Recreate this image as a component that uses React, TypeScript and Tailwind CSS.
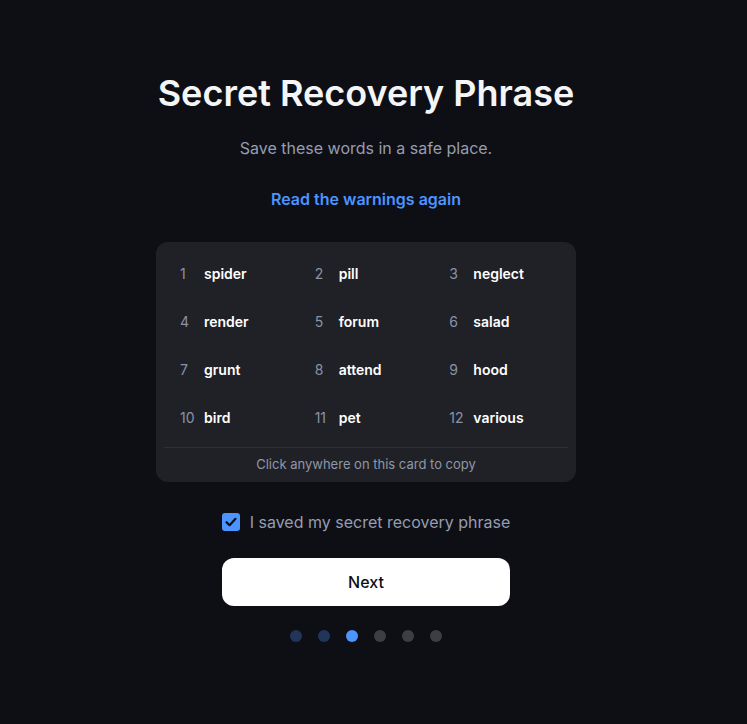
import React from "react";

const words = [
  "spider", "pill", "neglect",
  "render", "forum", "salad",
  "grunt", "attend", "hood",
  "bird", "pet", "various",
];

export default function App() {
  return (
    <div className="min-h-[724px] w-full bg-[#0e0f14]">
      <div
        className="w-[732px] flex flex-col items-center pt-[73px]"
        style={{ fontFamily: "Inter, 'Noto Sans', sans-serif" }}
      >
        <h1 className="text-[36px] leading-[40px] font-semibold text-[#f4f5f7]">
          Secret Recovery Phrase
        </h1>
        <p className="mt-[23px] text-[16px] leading-[24px] text-[#959db1]">
          Save these words in a safe place.
        </p>
        <button className="mt-[27px] text-[16px] leading-[24px] font-semibold text-[#4c94ff]">
          Read the warnings again
        </button>
        <div className="mt-[31px] w-[420px] rounded-[12px] bg-[#202127] px-2 pt-[7px] cursor-pointer">
          <div className="grid grid-cols-3">
            {words.map((w, i) => (
              <div key={i} className="h-12 flex items-center pl-4 text-[14px]">
                <span className="w-6 text-[#8a92a6]">{i + 1}</span>
                <span className="font-semibold text-white">{w}</span>
              </div>
            ))}
          </div>
          <div className="mt-[6px] h-px bg-[#2e3038]" />
          <div className="h-[34px] flex items-center justify-center text-[13px] text-[#8f97a8]">
            Click anywhere on this card to copy
          </div>
        </div>
        <label className="mt-[28px] flex items-center gap-[10px] text-[16px] leading-[24px] text-[#959db1]">
          <span className="w-[18px] h-[18px] rounded-[3px] bg-[#4c94ff] flex items-center justify-center">
            <svg width="14" height="14" viewBox="0 0 14 14" fill="none">
              <path d="M2.5 7.2 L5.6 10.2 L11.5 3.8" stroke="#0e0f14" strokeWidth="2.2" strokeLinecap="round" strokeLinejoin="round" />
            </svg>
          </span>
          I saved my secret recovery phrase
        </label>
        <button className="mt-[24px] w-[288px] h-[48px] rounded-[12px] bg-white text-[16px] font-medium text-[#0e0f14]">
          Next
        </button>
        <div className="mt-[24px] flex gap-4">
          <span className="w-3 h-3 rounded-full bg-[#213459]" />
          <span className="w-3 h-3 rounded-full bg-[#213459]" />
          <span className="w-3 h-3 rounded-full bg-[#4c94ff]" />
          <span className="w-3 h-3 rounded-full bg-[#3d3e44]" />
          <span className="w-3 h-3 rounded-full bg-[#3d3e44]" />
          <span className="w-3 h-3 rounded-full bg-[#3d3e44]" />
        </div>
      </div>
    </div>
  );
}
